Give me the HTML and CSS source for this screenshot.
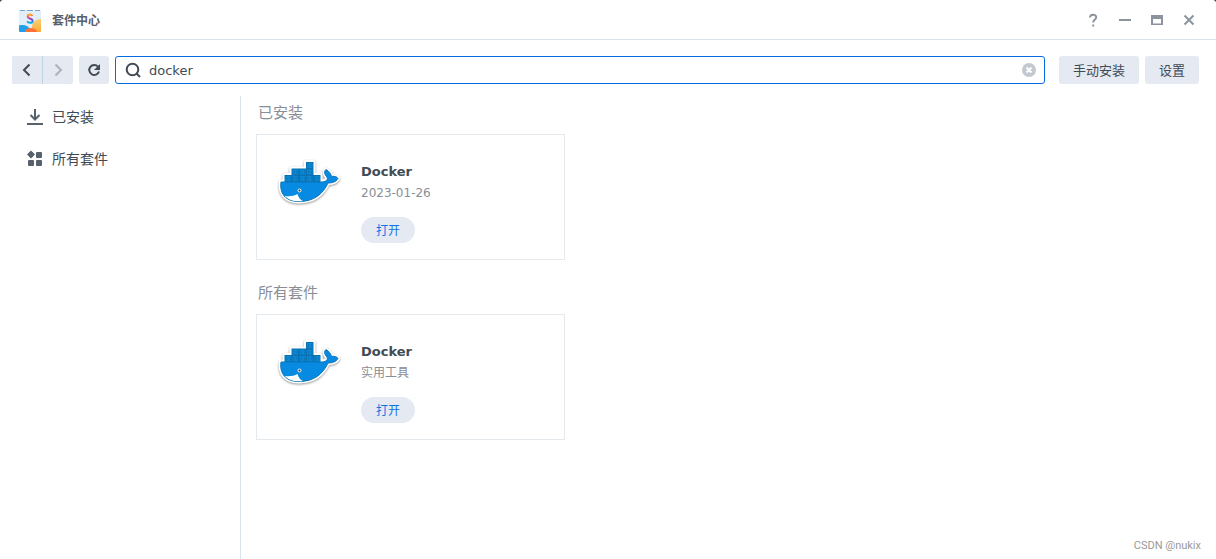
FILE: index.html
```html
<!DOCTYPE html>
<html lang="zh-CN">
<head>
    <meta charset="UTF-8">
    <meta name="viewport" content="width=device-width, initial-scale=1.0">
    <title>套件中心</title>
    <link rel="stylesheet" href="styles.css">
</head>
<body>

    <!-- Shared whale logo -->
    <svg class="defs" width="0" height="0" aria-hidden="true">
        <symbol id="whale" viewBox="7 7 64 50" overflow="visible">
            <g class="whale-outline">
                <path d="M14.5 32V25H21.5V18.5H36V12H43.5V25H50.5V32Z"/>
                <path d="M11 31.5H52C57 31 58 29 57 27C54 24 54 21 56 19.5C59 21 61 24 61.5 26.5C64 26 67 26.5 68 28.5C66 32 62 33 58 33C53 44 44 51.5 29 51.5C15 51.5 9.5 43 11 31.5Z"/>
            </g>
            <path fill="#0a72b4" d="M14.5 32V25H21.5V18.5H36V12H43.5V25H50.5V32Z"/>
            <g fill="#0b86d0">
                <path d="M37 13h5.5v5H37zM22.5 19.5H28V24.5H22.5zM30 19.5h5.5v5H30zM37 19.5h5.5v5H37z"/>
                <path d="M15.5 26H21v5h-5.5zM22.5 26H28v5h-5.5zM30 26h5.5v5H30zM37 26h5.5v5H37zM44.5 26H50v5h-5.5z"/>
            </g>
            <path stroke="#0a6fae" stroke-width="0.6" d="M38.5 14v3M41.5 14v3M24 20.5v3M27 20.5v3M31.5 20.5v3M34.5 20.5v3M38.5 20.5v3M41.5 20.5v3M17 27v3M20 27v3M24 27v3M27 27v3M31.5 27v3M34.5 27v3M38.5 27v3M41.5 27v3M46 27v3M49 27v3"/>
            <path fill="#078ae2" stroke="#0d74ba" d="M11 32H52C57 31.5 58 29.5 57 27C54 24 54 21 56 19.5C59 21 61 24 61.5 26.5C64 26 67 26.5 68 28.5C66 32 62 33 58 33C53 44 44 51.5 29 51.5C15 51.5 9.5 43 11 32Z"/>
            <path fill="#fff" d="M14.5 46C20 46.5 24 46 27.5 44C28.5 47.5 30.5 50 33 51C25 52 19 50.5 14.5 46Z"/>
            <circle cx="29.5" cy="40.5" r="2" fill="#d4e2ea"/>
            <circle cx="29.5" cy="40.5" r="1" fill="#2b4a5c"/>
        </symbol>
    </svg>

    <div class="window">
        <header class="titlebar">
            <svg class="app-icon" viewBox="0 0 24 24" aria-hidden="true">
                <defs>
                    <linearGradient id="letter" x1="0" y1="0" x2="0" y2="1">
                        <stop offset="0" stop-color="#ffa51f"/>
                        <stop offset="0.35" stop-color="#f0407a"/>
                        <stop offset="0.6" stop-color="#7d3be0"/>
                        <stop offset="1" stop-color="#00b4e6"/>
                    </linearGradient>
                    <linearGradient id="sand" x1="0" y1="0" x2="0" y2="1">
                        <stop offset="0" stop-color="#f9cf7a"/>
                        <stop offset="1" stop-color="#f9a51f"/>
                    </linearGradient>
                    <clipPath id="bag"><rect x="1" y="2" width="22" height="22" rx="1"/></clipPath>
                </defs>
                <g clip-path="url(#bag)">
                    <rect x="1" y="2" width="22" height="22" fill="#e2eef8"/>
                    <circle cx="22" cy="19" r="8" fill="url(#sand)"/>
                    <ellipse cx="4" cy="22" rx="8" ry="5" fill="#1ea0ea"/>
                    <ellipse cx="13" cy="24" rx="6" ry="4" fill="#ff7038"/>
                </g>
                <path d="M2 2.5H7M9 2.5H15M17 2.5H22" stroke="#7aa5cc"/>
                <path d="M14.3 8C13.6 6 9.7 6 9.7 8.6C9.7 11.3 14.6 10 14.6 12.9C14.6 15.6 10 15.3 9.3 13.2" fill="none" stroke="url(#letter)" stroke-width="2"/>
            </svg>
            <h1 class="title">套件中心</h1>
            <div class="window-controls">
                <button type="button" aria-label="帮助">
                    <svg viewBox="0 0 16 16"><path d="M5 5.5C5 1.8 11.2 1.8 11.2 5.3C11.2 7.5 8.2 7.6 8.2 10.5M8.2 12.5V14.5"/></svg>
                </button>
                <button type="button" aria-label="最小化">
                    <svg viewBox="0 0 16 16"><path d="M2 8H14"/></svg>
                </button>
                <button type="button" aria-label="最大化">
                    <svg viewBox="0 0 16 16"><path class="solid" d="M2 3H14V13H2ZM4 7V11.5H12V7Z"/></svg>
                </button>
                <button type="button" aria-label="关闭">
                    <svg viewBox="0 0 16 16"><path d="M3.5 3.5L12.5 12.5M12.5 3.5L3.5 12.5"/></svg>
                </button>
            </div>
        </header>

        <div class="toolbar">
            <div class="nav-buttons">
                <button class="btn icon-btn" type="button" aria-label="后退">
                    <svg viewBox="0 0 16 16"><path d="M10.5 2.5L5 8L10.5 13.5"/></svg>
                </button>
                <button class="btn icon-btn" type="button" aria-label="前进" disabled>
                    <svg viewBox="0 0 16 16"><path d="M5.5 2.5L11 8L5.5 13.5"/></svg>
                </button>
            </div>
            <button class="btn icon-btn" type="button" aria-label="刷新">
                <svg viewBox="0 0 16 16"><path d="M12 4.6A5 5 0 1 0 13 9.5"/><path class="solid" d="M14 2V8H8Z"/></svg>
            </button>
            <div class="search">
                <label for="search" aria-label="搜索">
                    <svg viewBox="0 0 16 16"><circle cx="7.5" cy="7.5" r="5.8"/><path d="M11.5 11.5L15 15"/></svg>
                </label>
                <input id="search" type="text" value="docker">
                <button class="clear" type="button" aria-label="清除">
                    <svg viewBox="0 0 14 14"><circle cx="7" cy="7" r="7"/><path d="M4.5 4.5L9.5 9.5M9.5 4.5L4.5 9.5"/></svg>
                </button>
            </div>
            <div class="actions">
                <button class="btn" type="button">手动安装</button>
                <button class="btn" type="button">设置</button>
            </div>
        </div>

        <div class="content">
            <nav class="sidebar">
                <a href="#installed">
                    <svg viewBox="0 0 16 16"><path d="M8 1V11M3.5 7L8 11.5L12.5 7M0 16H16"/></svg>
                    已安装
                </a>
                <a href="#all">
                    <svg viewBox="0 0 16 16"><g class="solid"><path d="M4 0.5L5.5 2H6V2.5L8 4.5L6 6.5V7H5.5L4 8.5L2.500 7H2V6.5L0 4.5L2 2.5V2H2.5Z"/><rect x="9" y="2" width="6" height="6" rx="1"/><rect x="1" y="10" width="6" height="6" rx="1"/><rect x="9" y="10" width="6" height="6" rx="1"/></g></svg>
                    所有套件
                </a>
            </nav>

            <main class="packages">
                <section id="installed">
                    <h2>已安装</h2>
                    <article class="card">
                        <svg class="logo" aria-hidden="true"><use href="#whale"/></svg>
                        <div class="info">
                            <h3>Docker</h3>
                            <p>2023-01-26</p>
                            <button class="open" type="button">打开</button>
                        </div>
                    </article>
                </section>

                <section id="all">
                    <h2>所有套件</h2>
                    <article class="card">
                        <svg class="logo" aria-hidden="true"><use href="#whale"/></svg>
                        <div class="info">
                            <h3>Docker</h3>
                            <p>实用工具</p>
                            <button class="open" type="button">打开</button>
                        </div>
                    </article>
                </section>
            </main>
        </div>

        <span class="watermark">CSDN @nukix</span>
    </div>

</body>
</html>
```
FILE: styles.css
```css
* {
    margin: 0;
    padding: 0;
    box-sizing: border-box;
}

body {
    background: #222;
    color: #414b55;
    font-family: "DejaVu Sans", "Noto Sans CJK SC", sans-serif;
    font-size: 13px;
}

button, input {
    font: inherit;
    color: inherit;
    border: none;
}

button {
    cursor: pointer;
}

svg {
    display: block;
    flex-shrink: 0;
    width: 16px;
    height: 16px;
    fill: none;
    stroke: currentColor;
    stroke-width: 2;
}

.solid {
    fill: currentColor;
    fill-rule: evenodd;
    stroke: none;
}

.defs {
    position: absolute;
    width: 0;
    height: 0;
}

.window {
    position: relative;
    display: flex;
    flex-direction: column;
    min-height: 100vh;
    background: #fff;
    border-radius: 3px 3px 0 0;
}

/* Title bar */
.titlebar {
    display: flex;
    align-items: center;
    height: 40px;
    padding: 0 19px 0 18px;
    border-bottom: 1px solid #dbe4ec;
}

.app-icon {
    width: 24px;
    height: 24px;
    margin-right: 10px;
    stroke: none;
    stroke-width: 1;
}

.title {
    font-size: 12px;
    font-weight: 700;
    color: #57616b;
}

.window-controls {
    display: flex;
    gap: 16px;
    margin-left: auto;
    color: #8c949d;
}

.window-controls button {
    background: none;
}

/* Toolbar */
.toolbar {
    display: flex;
    gap: 6px;
    padding: 16px 17px 12px 12px;
}

.btn {
    height: 28px;
    padding: 0 14px 2px;
    background: #e5eaf2;
    border-radius: 3px;
}

.icon-btn {
    display: flex;
    align-items: center;
    justify-content: center;
    width: 30px;
    padding: 0;
}

.nav-buttons {
    display: flex;
    gap: 1px;
    background: #c0d3e4;
    border-radius: 3px;
}

.nav-buttons .btn:first-child {
    border-radius: 3px 0 0 3px;
}

.nav-buttons .btn:last-child {
    border-radius: 0 3px 3px 0;
}

.btn:disabled {
    color: #abb2bb;
}

.search {
    display: flex;
    flex: 1;
    align-items: center;
    height: 28px;
    padding: 0 8px 0 9px;
    border: 1px solid #056be0;
    border-radius: 3px;
}

.search input {
    flex: 1;
    min-width: 0;
    margin-left: 8px;
    background: none;
    outline: none;
}

.clear {
    background: none;
    color: #fff;
}

.clear svg {
    width: 14px;
    height: 14px;
}

.clear circle {
    fill: #c3c9d1;
    stroke: none;
}

.actions {
    display: flex;
    gap: 6px;
    margin-left: 8px;
}

/* Content */
.content {
    display: flex;
    flex: 1;
}

.sidebar {
    width: 241px;
    border-right: 1px solid #dbe4ec;
    font-size: 14px;
}

.sidebar a {
    display: flex;
    align-items: center;
    gap: 9px;
    height: 42px;
    padding: 0 0 2px 27px;
    color: inherit;
    text-decoration: none;
}

.sidebar svg {
    color: #57616b;
    overflow: visible;
}

.packages {
    flex: 1;
    padding: 4px 15px;
}

.packages h2 {
    padding-left: 2px;
    font-size: 15px;
    font-weight: 400;
    line-height: 26px;
    color: #888e96;
}

.card {
    display: flex;
    gap: 20px;
    width: 309px;
    max-width: 100%;
    margin: 8px 0 20px;
    padding: 22px 20px 16px;
    border: 1px solid #e4e9ed;
}

.logo {
    width: 64px;
    height: 50px;
    overflow: visible;
    stroke: none;
    stroke-width: 1;
    filter: drop-shadow(0 1px 1px rgba(0, 0, 0, 0.4));
}

.whale-outline {
    fill: #fff;
    stroke: #fff;
    stroke-width: 4;
    stroke-linejoin: round;
}

.info {
    padding-top: 5px;
}

.info h3 {
    font-size: 13px;
    line-height: 20px;
}

.info p {
    font-size: 12px;
    line-height: 22px;
    color: #888e96;
}

.open {
    width: 54px;
    height: 26px;
    margin-top: 13px;
    padding-bottom: 2px;
    background: #e5eaf2;
    border-radius: 13px;
    color: #0f73e6;
    font-size: 12px;
}

.watermark {
    position: absolute;
    right: 15px;
    bottom: 5px;
    color: #999;
    font-family: Roboto, sans-serif;
    font-size: 11px;
    line-height: 16px;
}
```
